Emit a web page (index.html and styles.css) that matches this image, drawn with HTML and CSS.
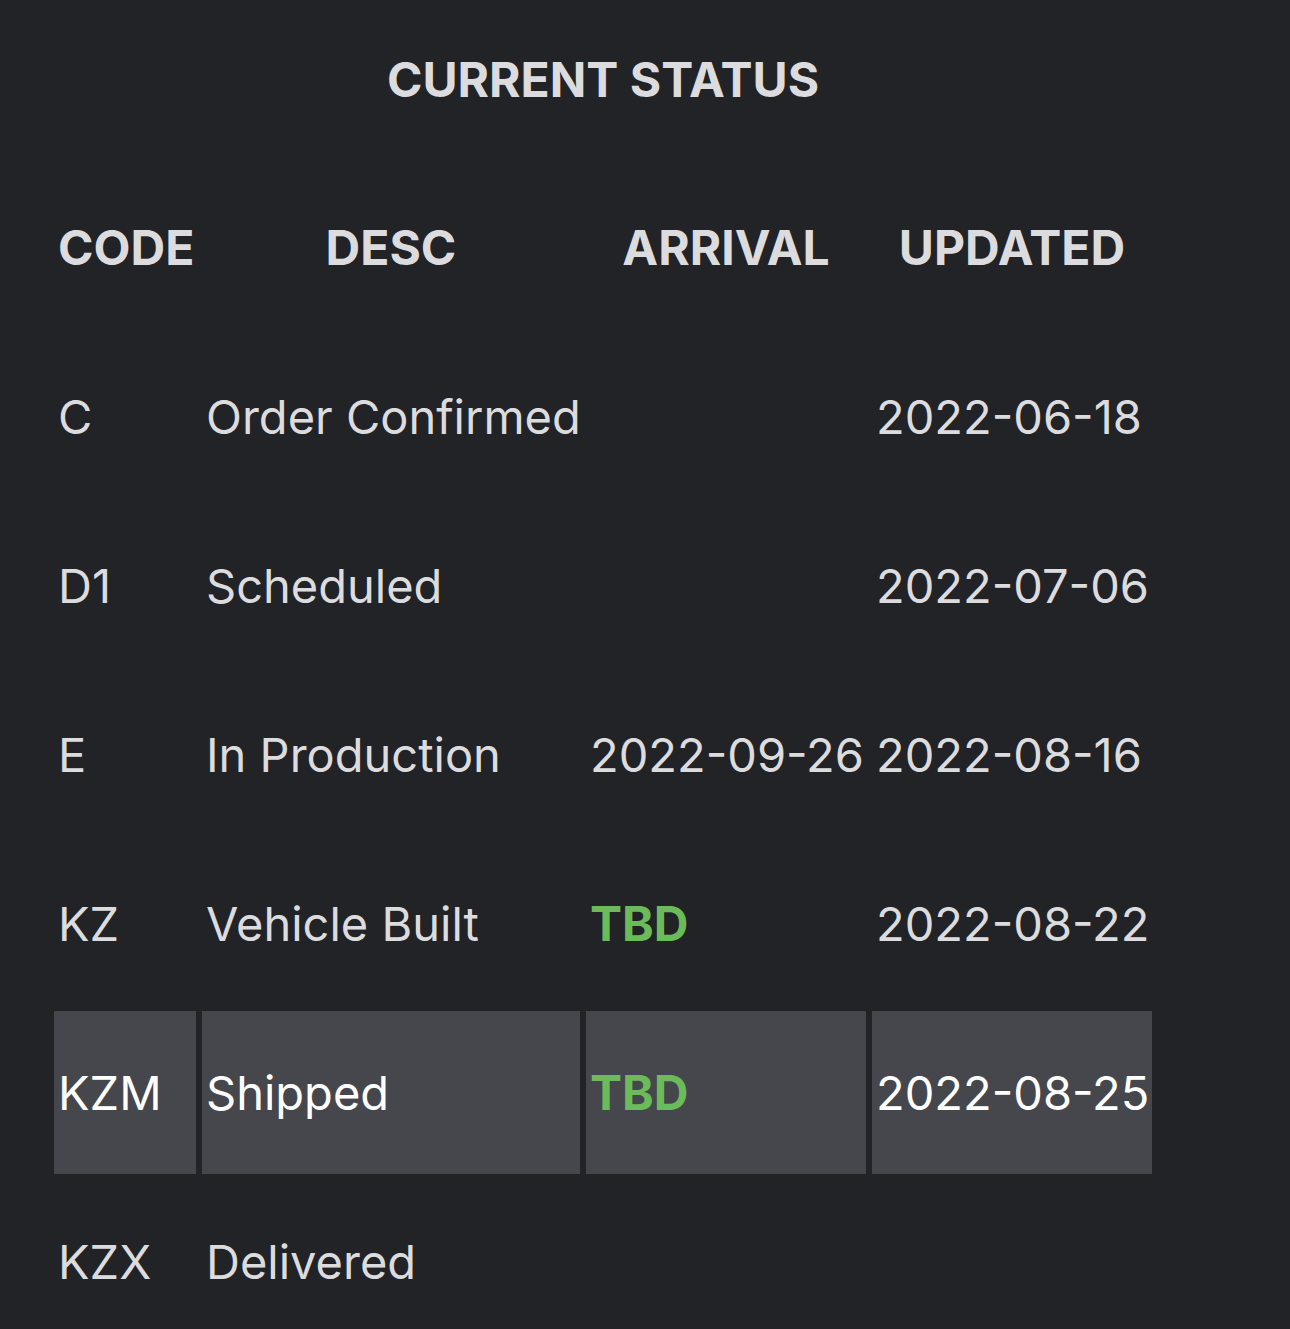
FILE: index.html
```html
<!DOCTYPE html>
<html>
<head>
    <title>Current Status</title>
    <meta name="viewport" content="width=device-width, initial-scale=1.0">
    <link rel="stylesheet" href="styles.css">
</head>
<body>
    <table class="status">
        <caption>CURRENT STATUS</caption>
        <colgroup>
            <col class="col-code">
            <col class="col-desc">
            <col class="col-date">
            <col class="col-date">
        </colgroup>
        <thead>
            <tr>
                <th>CODE</th>
                <th>DESC</th>
                <th>ARRIVAL</th>
                <th>UPDATED</th>
            </tr>
        </thead>
        <tbody>
            <tr>
                <td>C</td>
                <td>Order Confirmed</td>
                <td></td>
                <td>2022-06-18</td>
            </tr>
            <tr>
                <td>D1</td>
                <td>Scheduled</td>
                <td></td>
                <td>2022-07-06</td>
            </tr>
            <tr>
                <td>E</td>
                <td>In Production</td>
                <td>2022-09-26</td>
                <td>2022-08-16</td>
            </tr>
            <tr>
                <td>KZ</td>
                <td>Vehicle Built</td>
                <td class="tbd">TBD</td>
                <td>2022-08-22</td>
            </tr>
            <tr class="current">
                <td>KZM</td>
                <td>Shipped</td>
                <td class="tbd">TBD</td>
                <td>2022-08-25</td>
            </tr>
            <tr>
                <td>KZX</td>
                <td>Delivered</td>
                <td></td>
                <td></td>
            </tr>
        </tbody>
    </table>
</body>
</html>
```

FILE: styles.css
```css
html, body {
    margin: 0;
    background-color: #222327;
    color: #dcdcde;
    font-family: Inter, "Noto Sans", sans-serif;
    overflow: hidden;
}

table.status {
    margin-left: 48px;
    width: 1110px;
    table-layout: fixed;
    border-spacing: 6px;
}

caption {
    height: 160px;
    line-height: 160px;
    font-size: 48px;
    font-weight: 700;
    text-align: center;
}

.col-code {
    width: 142px;
}
.col-desc {
    width: 378px;
}
.col-date {
    width: 280px;
}

th, td {
    height: 163px;
    padding: 0 4px;
    white-space: nowrap;
    vertical-align: middle;
}

th {
    font-size: 48px;
    font-weight: 700;
    text-align: center;
}

td {
    font-size: 47px;
    font-weight: 400;
    text-align: left;
}

td.tbd {
    color: #6cbb5a;
    font-size: 48px;
    font-weight: 700;
}

tr.current td {
    background-color: #45474d;
    color: #ffffff;
}
tr.current td.tbd {
    color: #6cbb5a;
}
```
